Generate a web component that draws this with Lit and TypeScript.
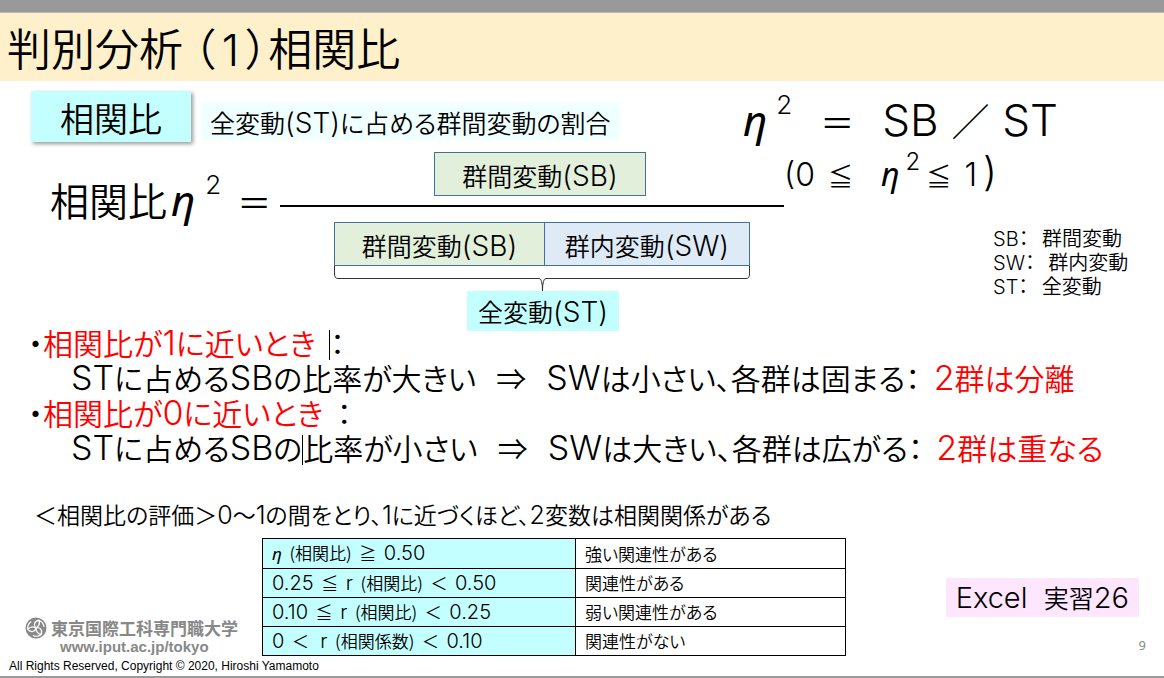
import { LitElement, html, svg, css } from "lit";
import { customElement } from "lit/decorators.js";

const lat = (text: string) => html`<span class="lat">${text}</span>`;
const eta = html`<i class="eta">η</i>`;

@customElement("app-root")
export class AppRoot extends LitElement {
  static styles = css`
    :host {
      display: block;
      color: #000;
      background: #fff;
      font-family: "Noto Sans CJK JP", sans-serif;
      font-weight: 350;
      font-feature-settings: "palt";
    }
    * { box-sizing: border-box; }
    h1, h2, p, ul { margin: 0; padding: 0; font-weight: inherit; list-style: none; }
    p, h1, h2, li, .box, .term { white-space: pre; }
    .lat { font-family: "Inter", "Noto Sans CJK JP", sans-serif; font-weight: 300; line-height: 1; }
    .window-bar { height: 13px; background: #999; border-bottom: 1px solid #b8b8b8; }
    h1 {
      background: #fff0cc;
      padding-left: 7px;
      font-size: 44px;
      line-height: 68px;
    }
    h1 .lat { margin: 0 7px; }
    .lead { display: flex; align-items: flex-start; padding: 10px 106px 0 31px; height: 66px; }
    h2 {
      width: 160px;
      background: #c4ffff;
      box-shadow: 2px 2px 4px #999;
      text-align: center;
      font-size: 34px;
      line-height: 53px;
      height: 51px;
    }
    .subtitle {
      margin: 11px 0 0 10px;
      padding: 0 9px;
      background: #f0ffff;
      font-size: 25px;
      line-height: 40px;
      height: 38px;
    }
    .subtitle .lat, .box .lat { font-size: 28px; }
    .eta { font-family: "Noto Sans", sans-serif; font-weight: 400; font-style: italic; }
    .eq { display: flex; align-items: baseline; line-height: 60px; }
    .eq sup { font: 300 26px/1 "Inter", sans-serif; vertical-align: baseline; position: relative; top: -22px; }
    .eq .equals { font-size: 34px; }
    .main-eq { margin-left: auto; font-size: 44px; line-height: 52px; }
    .main-eq .eta, .ratio-eq .eta { font-size: 42px; }
    .main-eq sup { margin: 0 28px 0 9px; }
    .main-eq .sb { margin-left: 28px; }
    .main-eq .slash { font-size: 38px; margin: 0 3px; }
    .model { display: flex; align-items: flex-start; padding: 5px 35px 0 50px; }
    .ratio-eq { width: 230px; font-size: 39px; margin-top: 17px; }
    .ratio-eq .eta { margin-left: 4px; }
    .ratio-eq sup { margin: 0 16px 0 10px; }
    .fraction { flex: 0 0 504px; display: flex; flex-direction: column; align-items: center; }
    .box {
      border: 1px solid #41719c;
      background: #e2efda;
      font-size: 25px;
      line-height: 44px;
      height: 44px;
      text-align: center;
    }
    .numerator { width: 212px; margin-left: 16px; }
    .bar { width: 100%; height: 2px; background: #000; margin: 9px 0 15px; }
    .denominator { display: flex; margin-left: 20px; }
    .denominator .sb { width: 210px; border-right: 0; }
    .denominator .sw { width: 206px; background: #deeaf6; }
    .brace { display: block; width: 416px; height: 25px; margin-left: 20px; fill: none; stroke: #333; }
    .total { border: 0; background: #c4ffff; height: 40px; line-height: 41px; width: 152px; margin-left: 22px; }
    .side { flex: 1; }
    .range { font-size: 32px; line-height: 24px; height: 44px; }
    .range sup { font-size: 24px; top: -16px; margin-left: 6px; }
    .range .eta { font-size: 32px; margin-left: 22px; }
    .range .sign { font-size: 25px; margin: 0 6px; }
    .range .close { font-size: 40px; margin-left: 6px; }
    .legend { width: 136px; margin: 30px 0 0 auto; font-size: 20px; line-height: 24px; }
    .cases { margin-top: -6px; padding-left: 28px; font-size: 30px; line-height: 35px; }
    .cases .lat { font-size: 34px; }
    .cases .detail { padding-left: 43px; }
    .red { color: #f00; }
    .caret { display: inline-block; width: 1px; height: 30px; background: #000; vertical-align: -5px; }
    .scale { margin-top: 30px; padding: 0 0 5px 34px; font-size: 23px; line-height: 38px; }
    .scale .lat { font-size: 25px; }
    .bottom { display: flex; }
    .school { width: 262px; padding: 79px 0 0 25px; color: #888; }
    .brand { display: flex; align-items: center; gap: 4px; font-size: 17px; line-height: 22px; font-weight: 700; white-space: nowrap; }
    .brand svg { width: 22px; height: 22px; flex: none; }
    .url {
      display: block;
      padding-left: 35px;
      color: inherit;
      text-decoration: none;
      font: bold 15px/16px "Liberation Sans", sans-serif;
    }
    table { border-collapse: collapse; width: 584px; flex: none; font-size: 17px; line-height: 28px; table-layout: fixed; }
    th, td { border: 1px solid #000; padding: 0 9px; height: 29px; text-align: left; font-weight: 350; white-space: pre; }
    th { width: 313px; background: #c4ffff; }
    th .lat { font-size: 20px; }
    .aside { flex: 1; display: flex; flex-direction: column; align-items: flex-end; padding: 40px 25px 0 0; }
    .exercise { background: #ffe6ff; padding: 0 10px; font-size: 25px; line-height: 39px; }
    .exercise .lat { font-size: 29px; }
    .page { margin: 18px -7px 0 0; color: #888; font: 13px/20px "Noto Sans", sans-serif; }
    footer {
      padding: 0 9px;
      border-bottom: 2px solid #999;
      font: 12px/20px "Liberation Sans", sans-serif;
    }
  `;

  private rows = [
    [html`${eta}  (相関比)  ≧  ${lat("0.50")}`, "強い関連性がある"],
    [html`${lat("0.25")}  ≦  ${lat("r")}  (相関比)  ＜  ${lat("0.50")}`, "関連性がある"],
    [html`${lat("0.10")}  ≦  ${lat("r")}  (相関比)  ＜  ${lat("0.25")}`, "弱い関連性がある"],
    [html`${lat("0")}  ＜   ${lat("r")}  (相関係数)  ＜  ${lat("0.10")}`, "関連性がない"],
  ];

  render() {
    return html`
      <div class="window-bar"></div>
      <h1>判別分析 （${lat("1")}）相関比</h1>
      <div class="lead">
        <h2>相関比</h2>
        <p class="subtitle">全変動${lat("(ST)")}に占める群間変動の割合</p>
        <div class="eq main-eq">${eta}<sup>2</sup><span class="equals">＝</span><span class="term sb">${lat("SB")} <span class="slash">／</span> ${lat("ST")}</span></div>
      </div>
      <div class="model">
        <div class="eq ratio-eq"><span>相関比</span>${eta}<sup>2</sup><span class="equals">＝</span></div>
        <div class="fraction">
          <div class="box numerator">群間変動${lat("(SB)")}</div>
          <div class="bar"></div>
          <div class="denominator">
            <div class="box sb">群間変動${lat("(SB)")}</div>
            <div class="box sw">群内変動${lat("(SW)")}</div>
          </div>
          <svg class="brace" viewBox="0 0 416 25" aria-hidden="true">
            <path d="M.5 0V8Q.5 12.500 4 12.500H205Q208.500 12.500 208.500 25Q208.500 12.500 212 12.500H412Q415.500 12.500 415.500 8V0" />
          </svg>
          <div class="box total">全変動${lat("(ST)")}</div>
        </div>
        <div class="side">
          <div class="eq range"><span class="term">${lat("(0")} <span class="sign">≦</span></span>${eta}<sup>2</sup><span class="term"><span class="sign">≦</span> ${lat("1")}<span class="lat close">)</span></span></div>
          <ul class="legend">
            <li>${lat("SB")}：   群間変動</li>
            <li>${lat("SW")}：   群内変動</li>
            <li>${lat("ST")}：   全変動</li>
          </ul>
        </div>
      </div>
      <section class="cases">
        <p>・<span class="red">相関比が${lat("1")}に近いとき</span>  <span class="caret"></span>：</p>
        <p class="detail">${lat("ST")}に占める${lat("SB")}の比率が大きい   ⇒   ${lat("SW")}は小さい、各群は固まる：  <span class="red">${lat("2")}群は分離</span></p>
        <p>・<span class="red">相関比が${lat("0")}に近いとき</span>  ：</p>
        <p class="detail">${lat("ST")}に占める${lat("SB")}の<span class="caret"></span>比率が小さい   ⇒   ${lat("SW")}は大きい、各群は広がる：  <span class="red">${lat("2")}群は重なる</span></p>
      </section>
      <p class="scale">＜相関比の評価＞${lat("0")}～${lat("1")}の間をとり、${lat("1")}に近づくほど、${lat("2")}変数は相関関係がある</p>
      <div class="bottom">
        <div class="school">
          <div class="brand">
            <svg viewBox="0 0 22 22" aria-hidden="true">
              <circle cx="11" cy="11" r="10.500" fill="#888" />
              <g fill="none" stroke="#fff" stroke-width="1.200">
                ${[0, 120, 240].map((turn) => svg`<path transform="rotate(${turn} 11 11)" d="M11 11C8.500 8.500 8.500 4.500 14 3.200C15 6.500 13.500 9.500 11 11M14 3.200C17 4.500 18.700 7 19 10" />`)}
              </g>
            </svg>
            <span>東京国際工科専門職大学</span>
          </div>
          <a class="url" href="#">www.iput.ac.jp/tokyo</a>
        </div>
        <table>
          <tbody>
            ${this.rows.map(([range, meaning]) => html`<tr><th scope="row">${range}</th><td>${meaning}</td></tr>`)}
          </tbody>
        </table>
        <div class="aside">
          <p class="exercise">${lat("Excel  ")}実習${lat("26")}</p>
          <span class="page">9</span>
        </div>
      </div>
      <footer>All Rights Reserved, Copyright © 2020, Hiroshi Yamamoto</footer>
    `;
  }
}
